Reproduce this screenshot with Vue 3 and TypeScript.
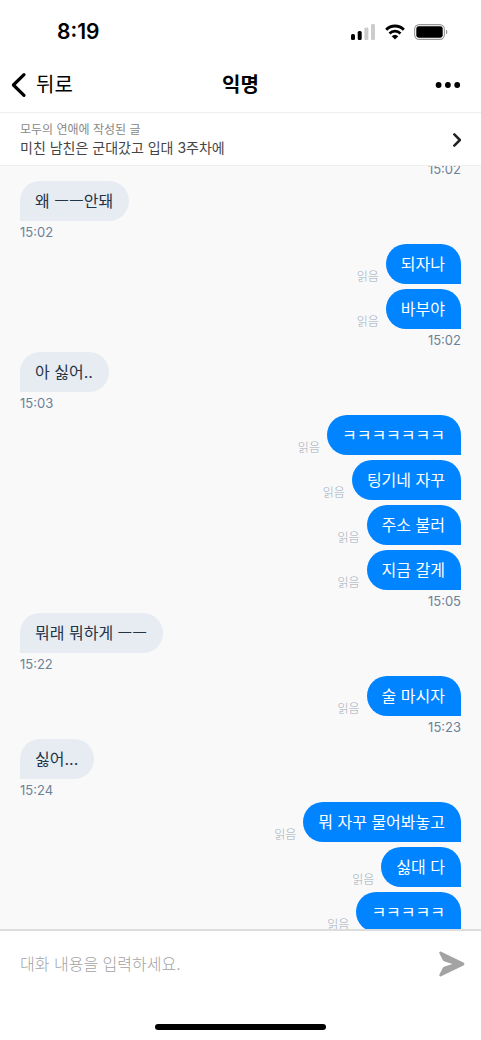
<script setup lang="ts">
import { ref } from 'vue'

interface MessageGroup {
  mine: boolean
  messages: string[]
  time: string
}

const draft = ref('')

const groups: MessageGroup[] = [
  { mine: true, messages: [], time: '15:02' },
  { mine: false, messages: ['왜 ㅡㅡ안돼'], time: '15:02' },
  { mine: true, messages: ['되자나', '바부야'], time: '15:02' },
  { mine: false, messages: ['아 싫어..'], time: '15:03' },
  { mine: true, messages: ['ㅋㅋㅋㅋㅋㅋㅋ', '팅기네 자꾸', '주소 불러', '지금 갈게'], time: '15:05' },
  { mine: false, messages: ['뭐래 뭐하게 ㅡㅡ'], time: '15:22' },
  { mine: true, messages: ['술 마시자'], time: '15:23' },
  { mine: false, messages: ['싫어...'], time: '15:24' },
  { mine: true, messages: ['뭐 자꾸 물어봐놓고', '싫대 다', 'ㅋㅋㅋㅋㅋ'], time: '' },
]
</script>

<template>
  <div class="screen">
    <div class="status">
      <span class="clock">8:19</span>
      <div class="indicators">
        <svg width="25" height="16" viewBox="0 0 25 16" aria-hidden="true">
          <rect x="0" y="10" width="4" height="6" rx="1.5" />
          <rect x="6.7" y="7" width="4" height="9" rx="1.5" />
          <rect x="13.4" y="3.5" width="4" height="12.5" rx="1.3" fill="#ccc" />
          <rect x="20" y="0" width="4" height="16" rx="1.3" fill="#ccc" />
        </svg>
        <svg width="20" height="16" viewBox="0 0 20 16" aria-hidden="true">
          <path d="M1.2 5.7a12.6 12.6 0 0 1 17.6 0" fill="none" stroke="#000" stroke-width="3" />
          <path d="M4.5 9.4a8 8 0 0 1 11 0" fill="none" stroke="#000" stroke-width="2.8" />
          <path d="M6.7 12.2a4.8 4.8 0 0 1 6.6 0L10 15.6z" />
        </svg>
        <svg width="34" height="16" viewBox="0 0 34 16" aria-hidden="true">
          <rect x="0.6" y="0.6" width="29.8" height="14.8" rx="4.6" fill="none" stroke="#999" stroke-width="1.1" />
          <rect x="2.3" y="2.3" width="26.4" height="11.4" rx="2.4" />
          <path d="M32 5.7c1.8.7 1.8 4 0 4.7z" fill="#999" />
        </svg>
      </div>
    </div>

    <header class="nav">
      <button class="back" type="button">
        <svg width="16" height="26" viewBox="0 0 16 26" aria-hidden="true">
          <path d="M13 2.6 2.4 13 13 23.4" fill="none" stroke="#000" stroke-width="3.2" stroke-linecap="round" stroke-linejoin="round" />
        </svg>
        <span>뒤로</span>
      </button>
      <h1>익명</h1>
      <button class="more" type="button" aria-label="더보기">
        <svg width="26" height="8" viewBox="0 0 26 8" aria-hidden="true">
          <circle cx="3.6" cy="4" r="2.9" />
          <circle cx="12.9" cy="4" r="2.9" />
          <circle cx="22.2" cy="4" r="2.9" />
        </svg>
      </button>
    </header>

    <a class="post" href="#">
      <span class="post-text">
        <span class="post-board">모두의 연애에 작성된 글</span>
        <span class="post-title">미친 남친은 군대갔고 입대 3주차에</span>
      </span>
      <svg width="10" height="16" viewBox="0 0 10 16" aria-hidden="true">
        <path d="M2.3 2.4 7.9 8l-5.6 5.6" fill="none" stroke="#222" stroke-width="2.5" stroke-linecap="round" stroke-linejoin="round" />
      </svg>
    </a>

    <main class="chat">
      <div class="log">
        <section v-for="(group, i) in groups" :key="i" class="group" :class="{ mine: group.mine }">
          <div v-for="(text, j) in group.messages" :key="j" class="row">
            <span v-if="group.mine" class="read">읽음</span>
            <p class="bubble">{{ text }}</p>
          </div>
          <time v-if="group.time">{{ group.time }}</time>
        </section>
      </div>
    </main>

    <footer class="composer">
      <form class="entry" @submit.prevent>
        <input v-model="draft" type="text" placeholder="대화 내용을 입력하세요." aria-label="대화 내용" />
        <button type="submit" aria-label="보내기">
          <svg width="26" height="26" viewBox="0 0 26 26" aria-hidden="true">
            <path d="M2.2.7 24.4 11.6c1.4.7 1.4 2.1 0 2.8L2.2 25.3C.8 25.9 0 24.8.4 23.6L3.5 17.4c.5-1.1 1.1-1.6 2.2-1.9L13.5 13 5.7 10.5c-1.1-.3-1.7-.8-2.2-1.9L.4 2.4C0 1.2.8.1 2.2.7z" fill="#a3a3a3" />
          </svg>
        </button>
      </form>
      <div class="home"></div>
    </footer>
  </div>
</template>

<style>
body {
  margin: 0;
  background: #fff;
}
</style>

<style scoped>
.screen {
  display: flex;
  flex-direction: column;
  height: 100vh;
  color: #000;
  background: #fff;
  font-family: Inter, "Noto Sans CJK KR", sans-serif;
}
svg {
  display: block;
  flex: none;
}
button {
  padding: 0;
  border: 0;
  background: none;
  color: inherit;
  font: inherit;
}
.status {
  display: flex;
  align-items: center;
  justify-content: space-between;
  height: 24px;
  padding: 20px 33px 13px 57px;
}
.clock {
  font-size: 21px;
  font-weight: 600;
  line-height: 24px;
}
.indicators {
  display: flex;
  gap: 9px;
}
.nav {
  display: grid;
  grid-template-columns: 1fr auto 1fr;
  align-items: center;
  height: 55px;
  padding: 0 11px;
  border-bottom: 1px solid #eee;
}
.back {
  display: flex;
  align-items: center;
  gap: 9px;
  justify-self: start;
  font-size: 20px;
  line-height: 28px;
}
h1 {
  margin: 0;
  font-size: 20px;
  font-weight: 700;
  line-height: 28px;
}
.more {
  justify-self: end;
  margin-right: 9px;
}
.post {
  display: flex;
  align-items: center;
  justify-content: space-between;
  padding: 8px 19px 7px 20px;
  border-bottom: 1px solid #eee;
  color: #444;
  text-decoration: none;
}
.post-text {
  display: flex;
  flex-direction: column;
}
.post-board {
  color: #888;
  font-size: 12px;
  line-height: 17px;
}
.post-title {
  font-size: 14px;
  line-height: 20px;
}
.chat {
  flex: 1;
  min-height: 0;
  overflow: hidden;
  background: #f9f9f9;
}
.log {
  margin-top: -8px;
  padding: 0 20px;
}
.group {
  display: flex;
  flex-direction: column;
  align-items: flex-start;
}
.group.mine {
  align-items: flex-end;
}
.row {
  display: flex;
  align-items: flex-end;
  gap: 7px;
}
.row + .row {
  margin-top: 5px;
}
.bubble {
  margin: 0;
  padding: 8px 16px 8px 15px;
  border-radius: 20px 20px 20px 0;
  background: #e7ecf3;
  color: #243447;
  font-size: 16px;
  line-height: 24px;
}
.mine .bubble {
  border-radius: 20px 20px 0 20px;
  background: #0084ff;
  color: #fff;
}
.read {
  color: #a0acb9;
  font-size: 12px;
  font-weight: 300;
  line-height: 14px;
}
time {
  padding: 2px 0 3px;
  color: #6c8299;
  font-size: 13px;
  line-height: 18px;
}
.composer {
  border-top: 2px solid #ddd;
}
.entry {
  display: flex;
  align-items: center;
  gap: 16px;
  height: 66px;
  padding: 0 16px 0 20px;
}
input {
  flex: 1;
  min-width: 0;
  padding: 0;
  border: 0;
  outline: 0;
  background: none;
  font: inherit;
  font-size: 16px;
  line-height: 24px;
}
input::placeholder {
  color: #a3a3a3;
  opacity: 1;
  font-weight: 300;
}
.home {
  width: 171px;
  height: 6px;
  margin: 27px auto 10px;
  border-radius: 3px;
  background: #000;
}
</style>
